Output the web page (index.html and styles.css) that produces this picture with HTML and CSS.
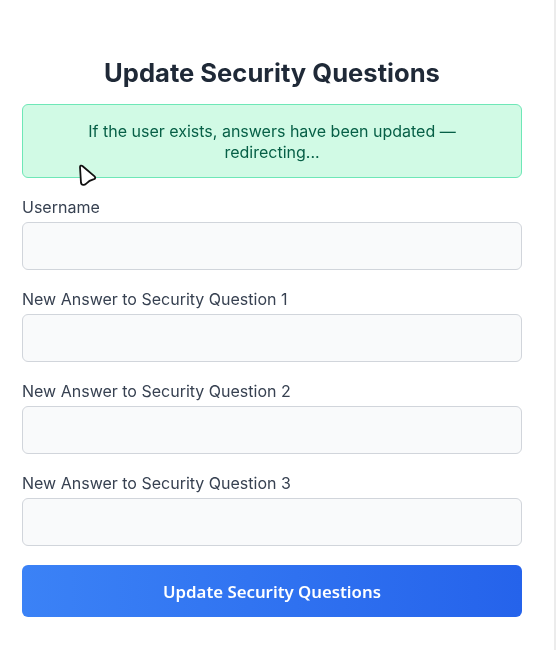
FILE: index.html
```html
<!DOCTYPE html>
<html lang="en">

<head>
  <meta charset="UTF-8">
  <meta name="viewport" content="width=device-width, initial-scale=1.0">
  <link rel="stylesheet" href="styles.css">
  <title>Update Security Questions</title>
</head>

<body>

  <main class="card">
    <h1 class="title">Update Security Questions</h1>

    <div class="alert">If the user exists, answers have been updated — redirecting...</div>

    <form class="form">
      <div class="field">
        <label for="username">Username</label>
        <input type="text" id="username">
      </div>
      <div class="field">
        <label for="answer1">New Answer to Security Question 1</label>
        <input type="text" id="answer1">
      </div>
      <div class="field">
        <label for="answer2">New Answer to Security Question 2</label>
        <input type="text" id="answer2">
      </div>
      <div class="field">
        <label for="answer3">New Answer to Security Question 3</label>
        <input type="text" id="answer3">
      </div>
      <button type="button" class="submit">Update Security Questions</button>
    </form>
  </main>

  <svg class="cursor" width="22" height="25" viewBox="0 0 22 25">
    <path d="M4 4 C4 2.6 5.4 2.2 6.4 3 L18.6 13.4 C19.7 14.4 19.3 15.8 18 16.2 C15 16.9 12 18.6 9.8 21 C8.2 22.4 5.4 22 5 20 Z" fill="#fff" stroke="#111" stroke-width="1.8" stroke-linejoin="round"></path>
  </svg>

</body>

</html>
```

FILE: styles.css
```css
html,
body {
  margin: 0;
  height: 100%;
}

body {
  background-color: #ececec;
  font-family: "Inter", "Liberation Sans", sans-serif;
  overflow: hidden;
}

.card {
  box-sizing: border-box;
  width: 554px;
  height: 650px;
  padding: 48px 32px 0 22px;
  background-color: #ffffff;
  will-change: transform;
}

.title {
  margin: 0 0 6px;
  font-size: 25.6px;
  line-height: 50px;
  font-weight: 700;
  color: #1f2937;
  text-align: center;
}

.alert {
  box-sizing: border-box;
  height: 74px;
  padding: 16px;
  margin-bottom: 19px;
  background-color: #d1fae5;
  border: 1px solid #6ee7b7;
  border-radius: 6px;
  color: #065f46;
  font-size: 16px;
  line-height: 21px;
  text-align: center;
}

.form {
  display: flex;
  flex-direction: column;
}

.field {
  margin-bottom: 19px;
}

.field label {
  display: block;
  margin-bottom: 5px;
  color: #374151;
  font-size: 16px;
  line-height: 20px;
}

.field input {
  box-sizing: border-box;
  display: block;
  width: 100%;
  height: 48px;
  background-color: #f9fafb;
  border: 1px solid #d1d5db;
  border-radius: 6px;
}

.submit {
  height: 52px;
  border: none;
  border-radius: 6px;
  background: linear-gradient(90deg, #3b82f6, #2563eb);
  color: #ffffff;
  font-family: "Noto Sans", "Open Sans", sans-serif;
  font-size: 16.8px;
  font-weight: 600;
  cursor: pointer;
}

.cursor {
  position: absolute;
  left: 76px;
  top: 163px;
}
```
